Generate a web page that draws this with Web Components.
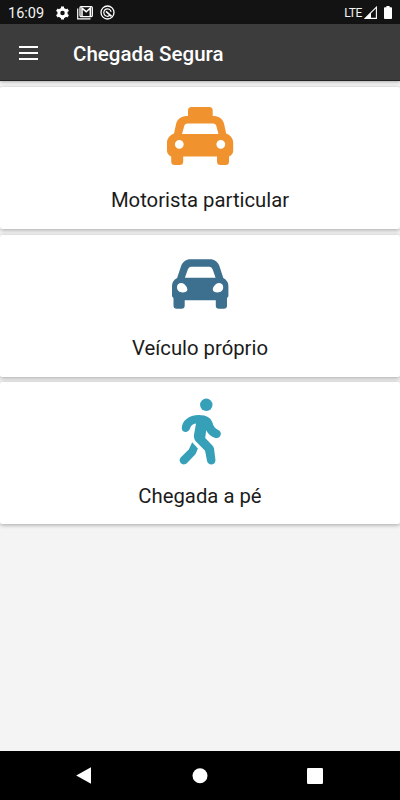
<!DOCTYPE html>
<html lang="pt-BR">
<head>
<meta charset="utf-8">
<title>Chegada Segura</title>
<style>
  html, body {
    margin: 0;
    height: 100%;
    overflow: hidden;
    font-family: Roboto, "Liberation Sans", sans-serif;
  }
</style>
</head>
<body>
<cs-app></cs-app>

<script>
const icons = {
  taxi: `
    <svg width="67" height="58" viewBox="0 0 67 58" fill="#f0932e">
      <path fill-rule="evenodd" d="M21 9V3.5Q21 0 24.5 0H42.3Q45.7 0 45.7 3.5V9C52 9 55.6 11.5 57 16.5L59.2 26.6C64 28.5 66.2 32 66.2 36V43.5Q66.2 47.5 62 49.5V54.5Q62 58 58.5 58H53.5Q50 58 50 54.5V49.5H16.2V54.5Q16.2 58 12.7 58H7.7Q4.2 58 4.2 54.5V49.5Q0 47.5 0 43.5V36C0 32 2.2 28.5 7 26.6L9.2 16.5C10.7 11.5 14.5 9 21 9ZM20.5 16.5Q18 16.5 17.4 18.6L15 27H51.5L49.2 18.6Q48.6 16.5 46 16.5Z
        M7.9 37.3a4.4 4.4 0 1 0 8.8 0a4.4 4.4 0 1 0-8.8 0ZM49.4 37.3a4.4 4.4 0 1 0 8.8 0a4.4 4.4 0 1 0-8.8 0Z"/>
    </svg>`,
  car: `
    <svg width="57" height="50" viewBox="0 0 57 50" fill="#3d708f">
      <path fill-rule="evenodd" d="M18.5 .2H38C42.5 .2 45.6 2.6 47.3 6.8L51.3 18.9C54.8 20.6 56.4 23.5 56.4 27V36.5Q56.4 38 55 39V46.5Q55 49.8 51.7 49.8H47Q43.8 49.8 43.8 46.5V41.2H12.7V46.5Q12.7 49.8 9.5 49.8H4.8Q1.5 49.8 1.5 46.5V39Q0 38 0 36.5V27C0 23.5 1.6 20.6 5.1 18.9L9.2 6.8C10.9 2.6 14 .2 18.5 .2ZM19 7.8Q16.7 7.8 15.8 10.4L12.9 18.8H43.6L40.7 10.4Q39.8 7.8 37.5 7.8Z
        M5 28.2C5 25.4 7 24 9.3 24C12 24 15.4 27.6 15.4 30.6C15.4 32.8 13.3 33.4 10.6 33.4C7.3 33.4 5 31.4 5 28.2ZM51.2 28.2C51.2 25.4 49.2 24 46.9 24C44.2 24 40.8 27.6 40.8 30.6C40.8 32.8 42.9 33.4 45.6 33.4C48.9 33.4 51.2 31.4 51.2 28.2Z"/>
    </svg>`,
  walk: `
    <svg width="43" height="67" viewBox="0 0 43 67" fill="#35a0b8">
      <circle cx="27.3" cy="6.8" r="6.2"/>
      <path d="M2.8 30C3 23 9.5 17 20 17C27.5 17 32.3 20 33.7 25.3C34.6 28.8 36 30.5 39.3 31.9C44.2 34.2 41.5 41.3 36.3 39.9C32 38.5 28.9 36 27.2 32.2L26.2 40L33.4 47.5Q34.5 48.7 35 50.5L36.4 61.5C37 67.4 29.2 68.4 28 62.8L26.1 52.8L17.5 44C15.2 41.6 14.6 39.4 15.1 36.2L17 25.5C13.7 25.9 11.9 27.2 11 30.6C9.5 35.6 2.6 35 2.8 30Z"/>
      <path d="M13.2 44.2L18.9 50.5L17.2 54.8Q16.8 55.8 16 56.7L8 65C3.8 69 -2 63.5 1.9 59.2L9.8 51.4Z"/>
    </svg>`
};

class StatusBar extends HTMLElement {
  constructor() {
    super();
    const shadow = this.attachShadow({mode: 'open'});
    shadow.innerHTML = `
      <style>
        :host {
          display: flex;
          box-sizing: border-box;
          align-items: center;
          height: 24px;
          padding: 1px 8px 0 8px;
          background: #131313;
          color: #f4f4f4;
          font-size: 14.5px;
        }
        svg { display: block; fill: none; }
        .time { margin-top: 1px; }
        .icons { display: flex; gap: 7px; margin-left: 11px; align-items: center; }
        .signal { display: flex; align-items: center; margin-left: auto; }
        .lte { font-size: 12px; letter-spacing: -0.4px; margin-right: 2px; }
        .battery { margin-left: 7px; }
      </style>
      <span class="time">16:09</span>
      <div class="icons">
        <svg width="15" height="14" viewBox="0 0 15 14">
          <circle cx="7.5" cy="7" r="3.7" stroke="#fff" stroke-width="2.9"/>
          <path d="M7.5 .4V3M7.5 11v2.6M1.8 3.7l2.2 1.3M11 9l2.2 1.3M1.8 10.3L4 9M11 5l2.2-1.3" stroke="#fff" stroke-width="3"/>
        </svg>
        <svg width="16" height="14" viewBox="0 0 16 14">
          <path d="M.7 2.5V12.9H13.5" stroke="#fff" stroke-width="1.2"/>
          <rect x="3" y=".7" width="12.3" height="9.9" rx="1" stroke="#fff" stroke-width="1.3"/>
          <path d="M5 10V2.2L9.2 5.7L13.3 2.2V10" stroke="#fff" stroke-width="1.5"/>
        </svg>
        <svg width="15" height="15" viewBox="0 0 15 15">
          <circle cx="7.5" cy="7.5" r="6.5" stroke="#fff" stroke-width="1.3"/>
          <path d="M10 10.3A3.7 3.7 0 1 1 11.1 6.8" stroke="#fff" stroke-width="1.2"/>
          <path d="M6 6.3L11.6 11.4" stroke="#fff" stroke-width="1.7"/>
        </svg>
      </div>
      <div class="signal">
        <span class="lte">LTE</span>
        <svg width="13" height="13" viewBox="0 0 13 13">
          <path d="M12.4 1.2V12.4H1.2Z" stroke="#fff" stroke-width="1.1"/>
          <path d="M7 6.5V12.4H1.2Z" fill="#fff"/>
        </svg>
        <svg class="battery" width="8" height="13" viewBox="0 0 8 13">
          <path d="M2.4 0H5.6V1.3H7.2Q8 1.3 8 2.2V12.1Q8 13 7.2 13H.8Q0 13 0 12.1V2.2Q0 1.3 .8 1.3H2.4Z" fill="#fff"/>
        </svg>
      </div>
    `;
  }
}

class AppHeader extends HTMLElement {
  constructor() {
    super();
    const shadow = this.attachShadow({mode: 'open'});
    shadow.innerHTML = `
      <style>
        :host {
          display: flex;
          box-sizing: border-box;
          align-items: center;
          height: 57px;
          padding: 2px 19px 0;
          background: #3c3c3c;
          border-bottom: 1px solid #252525;
          box-shadow: 0 1px 3px rgba(0, 0, 0, .3);
          color: #fff;
        }
        svg { display: block; margin-right: 35px; }
        h1 { margin: 2px 0 0; font-size: 20.5px; font-weight: 500; line-height: 24px; }
      </style>
      <svg width="19" height="14" viewBox="0 0 19 14">
        <path d="M0 1H19M0 7H19M0 13H19" stroke="#fff" stroke-width="2"/>
      </svg>
      <h1><slot></slot></h1>
    `;
  }
}

class OptionCard extends HTMLElement {
  constructor() {
    super();
    const shadow = this.attachShadow({mode: 'open'});
    shadow.innerHTML = `
      <style>
        :host {
          display: flex;
          flex-direction: column;
          height: 142px;
          background: #fff;
          border-radius: 2px;
          box-shadow: 0 1px 4px rgba(0, 0, 0, .33);
          color: #1b1b1b;
        }
        .icon {
          display: flex;
          align-items: center;
          justify-content: center;
          height: 98px;
        }
        svg { display: block; }
        .label { margin-top: .4px; font-size: 20.3px; line-height: 30px; text-align: center; }
      </style>
      <div class="icon">${icons[this.getAttribute('icon')]}</div>
      <div class="label"><slot></slot></div>
    `;
  }
}

class NavigationBar extends HTMLElement {
  constructor() {
    super();
    const shadow = this.attachShadow({mode: 'open'});
    shadow.innerHTML = `
      <style>
        :host {
          display: flex;
          box-sizing: border-box;
          align-items: center;
          justify-content: space-between;
          height: 49px;
          padding: 0 77px 0 76px;
          background: #000;
        }
        svg { display: block; fill: #fff; }
      </style>
      <svg width="16" height="17" viewBox="0 0 16 17"><path d="M.2 8.5L15 .2V16.8Z"/></svg>
      <svg width="16" height="16" viewBox="0 0 16 16"><circle cx="8" cy="7.8" r="7.5"/></svg>
      <svg width="16" height="16" viewBox="0 0 16 16"><rect width="16" height="16" rx="1.3"/></svg>
    `;
  }
}

class ChegadaApp extends HTMLElement {
  constructor() {
    super();
    const shadow = this.attachShadow({mode: 'open'});
    shadow.innerHTML = `
      <style>
        :host {
          display: flex;
          flex-direction: column;
          height: 100vh;
          background: #f4f4f4;
        }
        main {
          display: flex;
          flex: 1;
          flex-direction: column;
          gap: 5.7px;
          padding-top: 6px;
        }
      </style>
      <status-bar></status-bar>
      <app-header>Chegada Segura</app-header>
      <main>
        <option-card icon="taxi">Motorista particular</option-card>
        <option-card icon="car">Veículo próprio</option-card>
        <option-card icon="walk">Chegada a pé</option-card>
      </main>
      <navigation-bar></navigation-bar>
    `;
  }
}

customElements.define('status-bar', StatusBar);
customElements.define('app-header', AppHeader);
customElements.define('option-card', OptionCard);
customElements.define('navigation-bar', NavigationBar);
customElements.define('cs-app', ChegadaApp);
</script>
</body>
</html>
